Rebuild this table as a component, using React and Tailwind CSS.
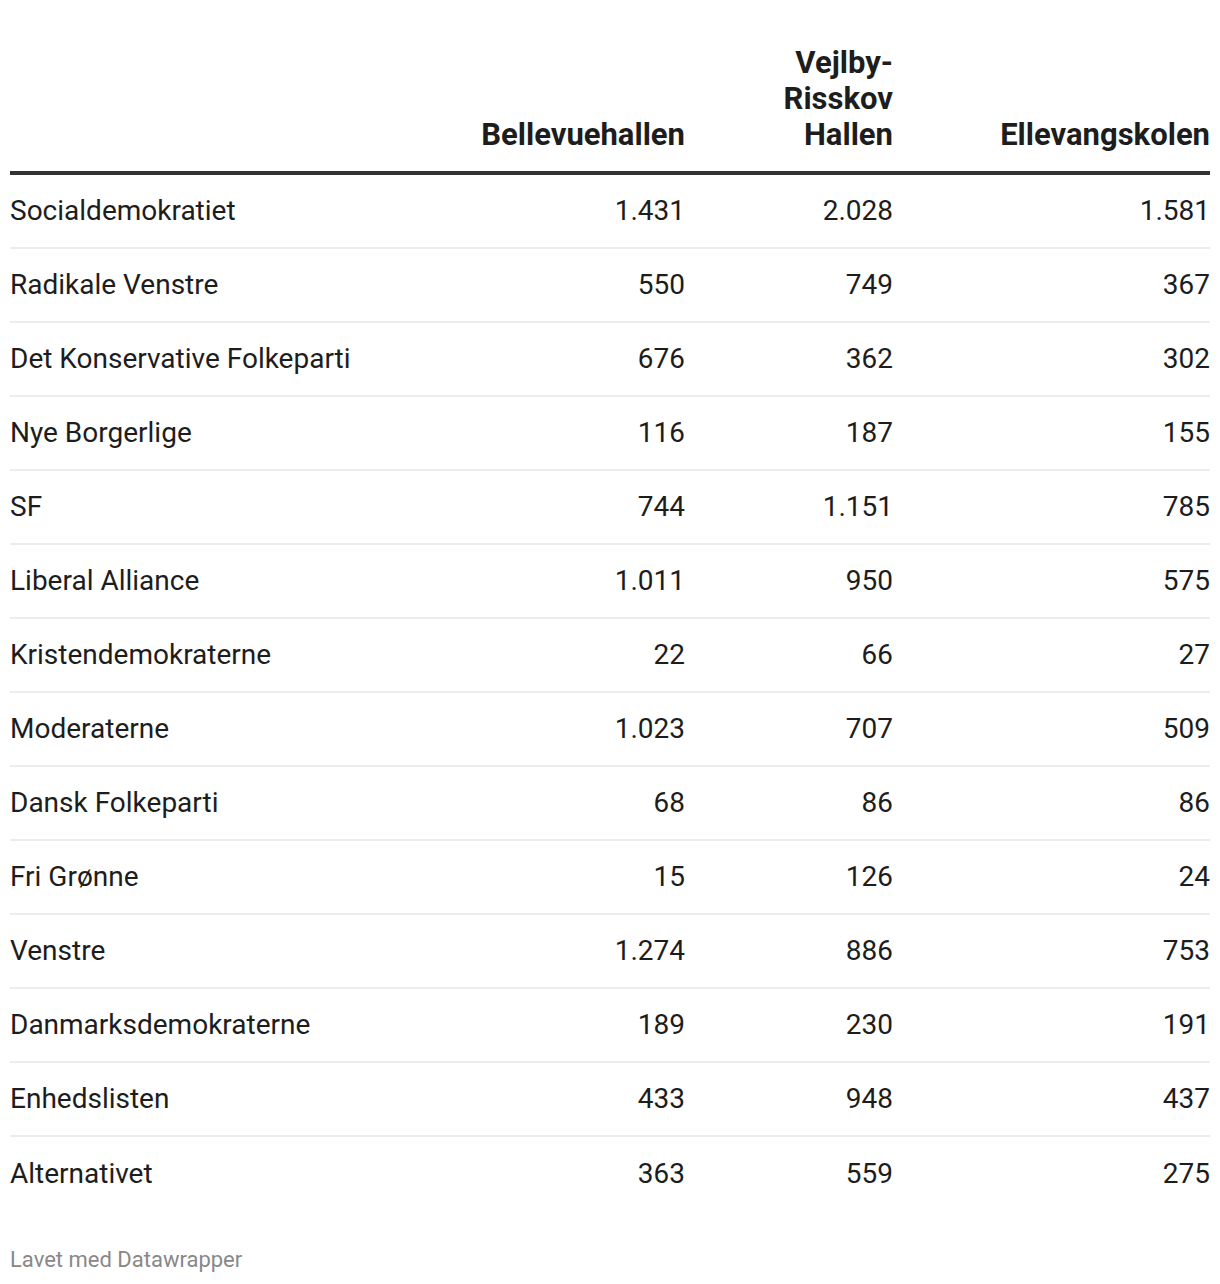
import React from "react";

const rows = [
  ["Socialdemokratiet", "1.431", "2.028", "1.581"],
  ["Radikale Venstre", "550", "749", "367"],
  ["Det Konservative Folkeparti", "676", "362", "302"],
  ["Nye Borgerlige", "116", "187", "155"],
  ["SF", "744", "1.151", "785"],
  ["Liberal Alliance", "1.011", "950", "575"],
  ["Kristendemokraterne", "22", "66", "27"],
  ["Moderaterne", "1.023", "707", "509"],
  ["Dansk Folkeparti", "68", "86", "86"],
  ["Fri Grønne", "15", "126", "24"],
  ["Venstre", "1.274", "886", "753"],
  ["Danmarksdemokraterne", "189", "230", "191"],
  ["Enhedslisten", "433", "948", "437"],
  ["Alternativet", "363", "559", "275"],
];

export default function App() {
  return (
    <div className="bg-white w-[1220px] min-h-[1284px] px-[10px] pt-[45px] font-['Roboto',sans-serif] text-[#1d1d1d]">
      <div className="grid grid-cols-[465px_210px_208px_317px] items-end border-b-[4px] border-[#333] pb-[18px] text-[31px] leading-[36px] font-bold">
        <div></div>
        <div className="text-right">Bellevuehallen</div>
        <div className="text-right">Vejlby-<br />Risskov<br />Hallen</div>
        <div className="text-right">Ellevangskolen</div>
      </div>
      {rows.map((r, i) => (
        <div
          key={i}
          className={`grid grid-cols-[465px_210px_208px_317px] items-center h-[74px] text-[28px] ${i < rows.length - 1 ? "border-b-2 border-[#ececec]" : ""}`}
        >
          <div>{r[0]}</div>
          <div className="text-right tabular-nums">{r[1]}</div>
          <div className="text-right tabular-nums">{r[2]}</div>
          <div className="text-right tabular-nums">{r[3]}</div>
        </div>
      ))}
      <div className="mt-[32px] text-[22px] text-[#888]">Lavet med Datawrapper</div>
    </div>
  );
}
